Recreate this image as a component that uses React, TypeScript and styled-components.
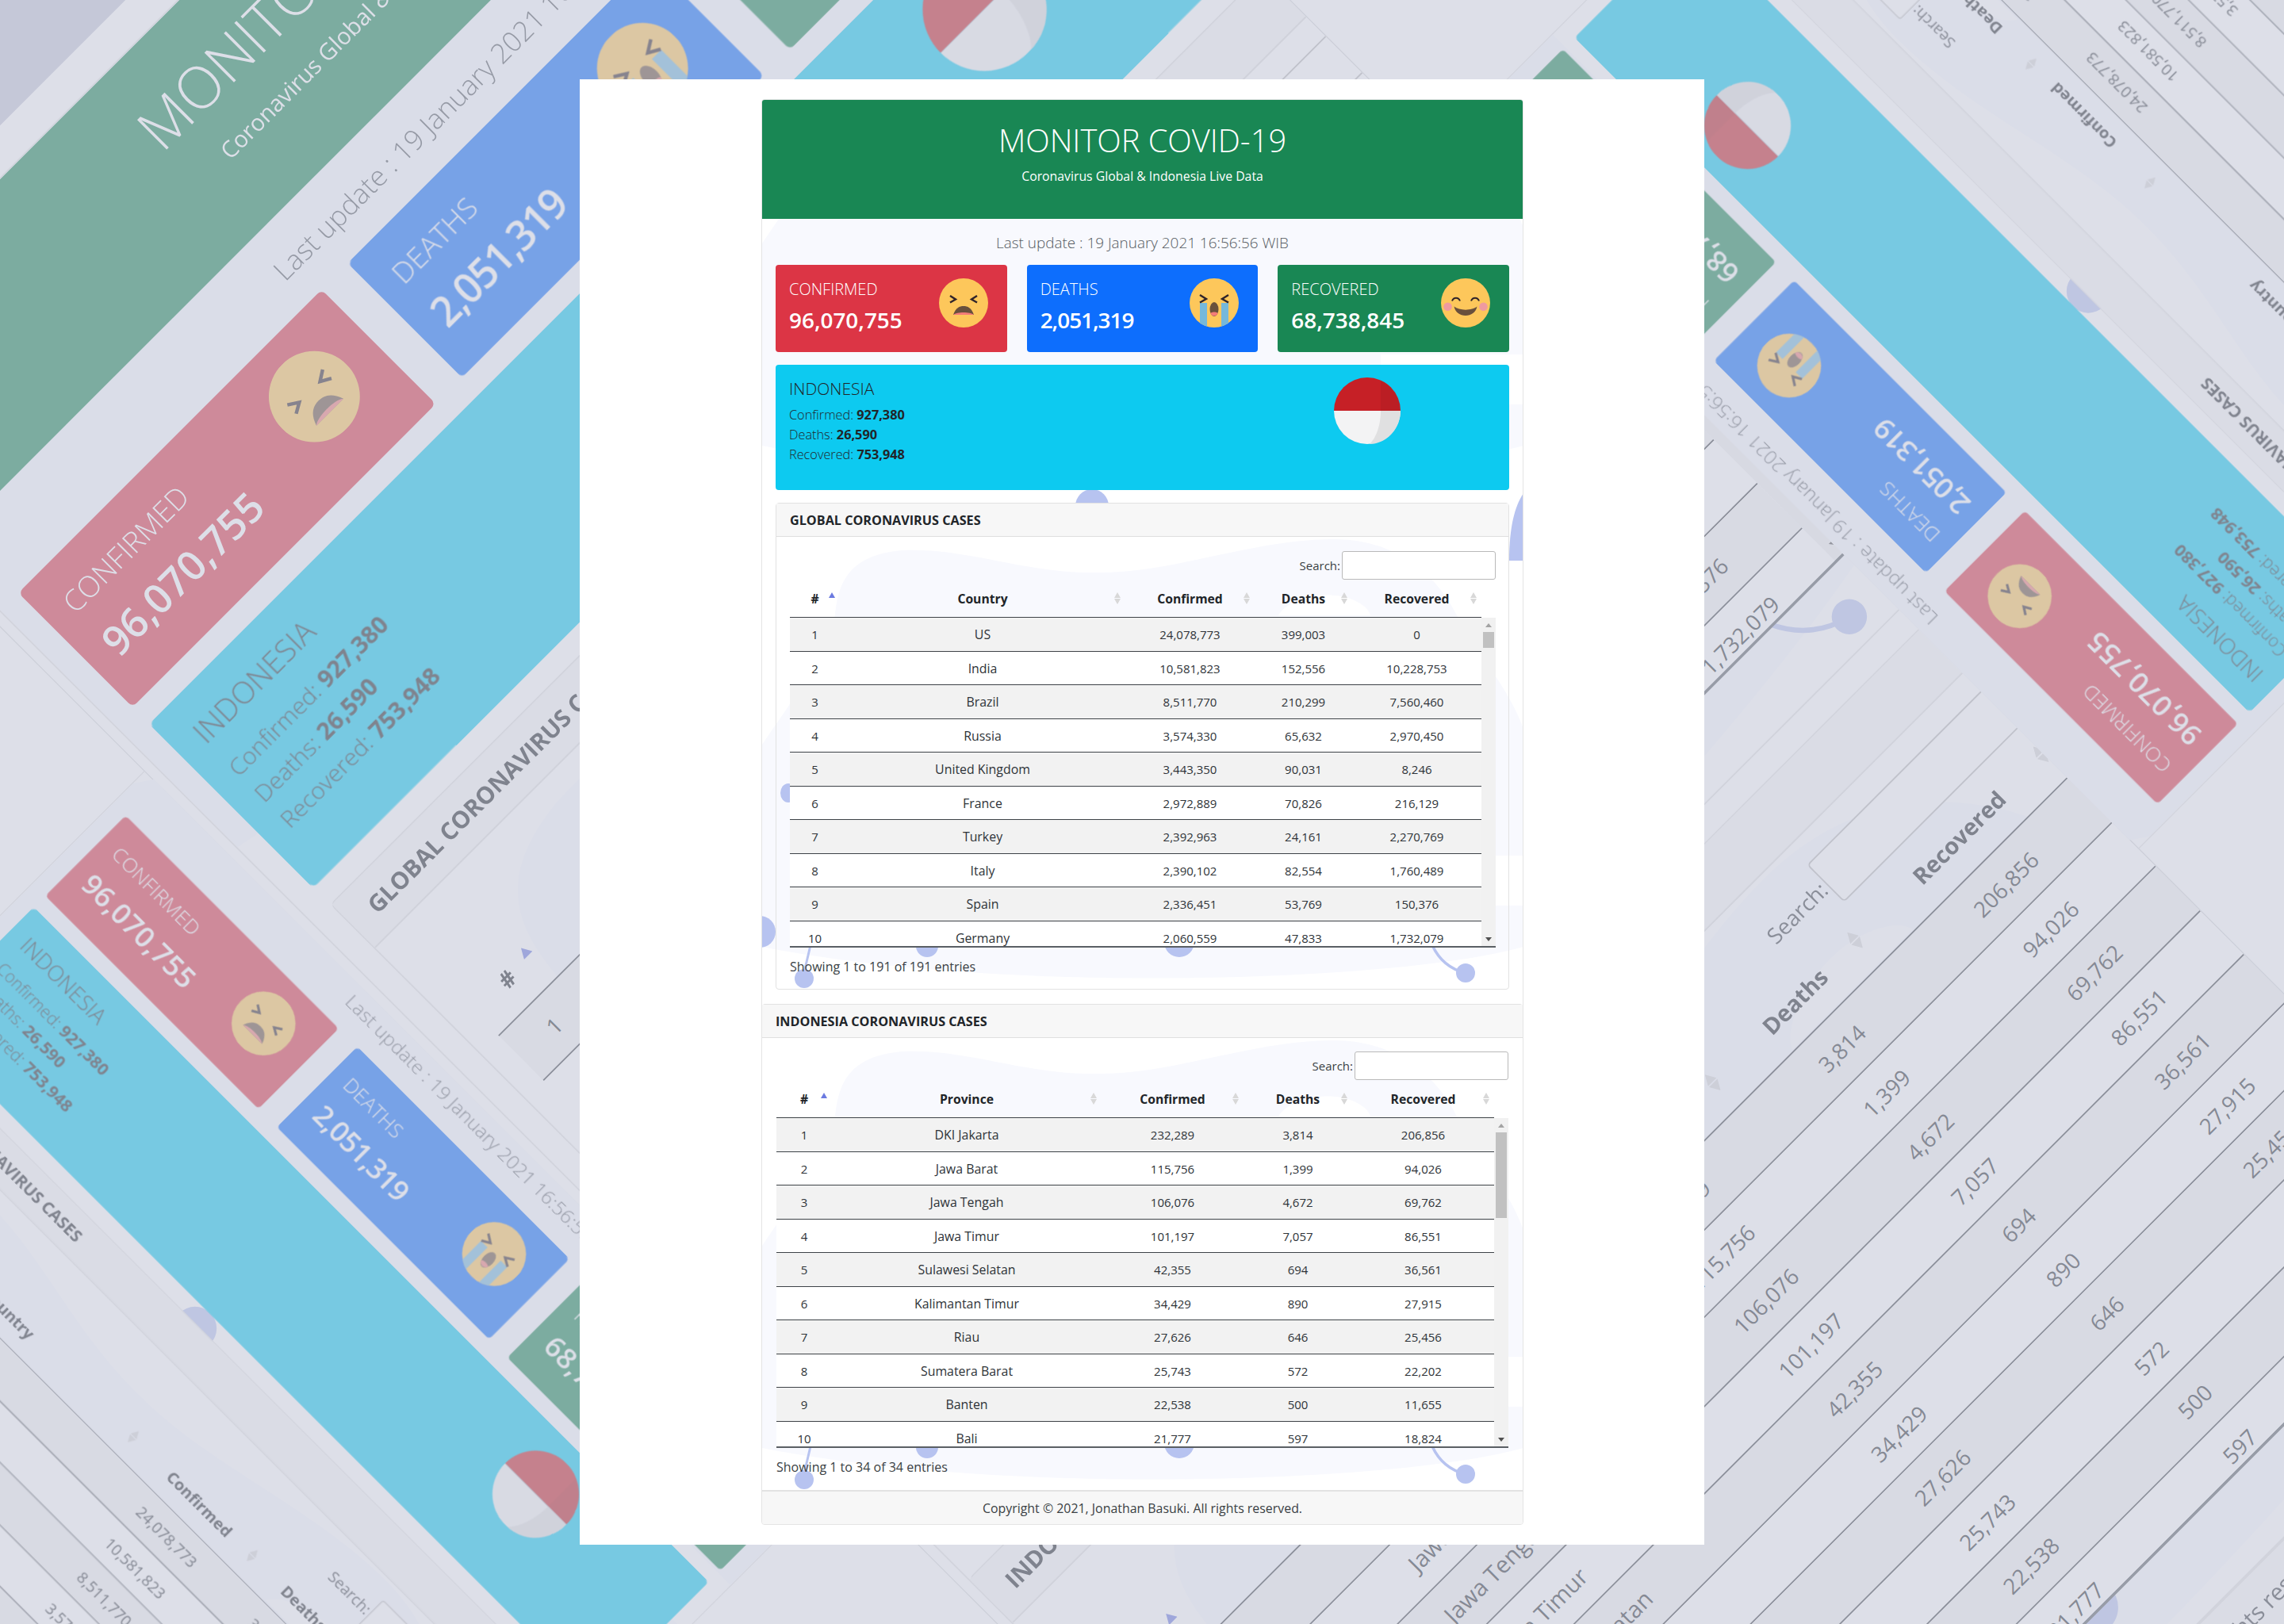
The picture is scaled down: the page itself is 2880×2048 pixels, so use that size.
import styled, { createGlobalStyle } from "styled-components";

const GlobalStyle = createGlobalStyle`
  html, body {
    margin: 0;
    padding: 0;
    background: #c5c8d8;
  }
  * {
    box-sizing: border-box;
  }
`;

const FONT = `"Open Sans", "Noto Sans", "Liberation Sans", sans-serif`;

const GLOBAL_ROWS = [
  ["1", "US", "24,078,773", "399,003", "0"],
  ["2", "India", "10,581,823", "152,556", "10,228,753"],
  ["3", "Brazil", "8,511,770", "210,299", "7,560,460"],
  ["4", "Russia", "3,574,330", "65,632", "2,970,450"],
  ["5", "United Kingdom", "3,443,350", "90,031", "8,246"],
  ["6", "France", "2,972,889", "70,826", "216,129"],
  ["7", "Turkey", "2,392,963", "24,161", "2,270,769"],
  ["8", "Italy", "2,390,102", "82,554", "1,760,489"],
  ["9", "Spain", "2,336,451", "53,769", "150,376"],
  ["10", "Germany", "2,060,559", "47,833", "1,732,079"],
];

const PROVINCE_ROWS = [
  ["1", "DKI Jakarta", "232,289", "3,814", "206,856"],
  ["2", "Jawa Barat", "115,756", "1,399", "94,026"],
  ["3", "Jawa Tengah", "106,076", "4,672", "69,762"],
  ["4", "Jawa Timur", "101,197", "7,057", "86,551"],
  ["5", "Sulawesi Selatan", "42,355", "694", "36,561"],
  ["6", "Kalimantan Timur", "34,429", "890", "27,915"],
  ["7", "Riau", "27,626", "646", "25,456"],
  ["8", "Sumatera Barat", "25,743", "572", "22,202"],
  ["9", "Banten", "22,538", "500", "11,655"],
  ["10", "Bali", "21,777", "597", "18,824"],
];

const Stage = styled.div`
  position: relative;
  width: 2880px;
  height: 2048px;
  overflow: hidden;
  display: flex;
  justify-content: center;
  align-items: flex-start;
  padding-top: 100px;
  font-family: ${FONT};
  color: #212529;
`;

/* the tilted page copies behind the window */
const Backdrop = styled.div`
  position: absolute;
  inset: 0;
  overflow: hidden;
  opacity: 0.42;
`;

const TiltedPage = styled.div<{ $x: number; $y: number; $angle: number; $scale: number; $cut: number }>`
  position: absolute;
  left: 0;
  top: 0;
  width: 1418px;
  height: 1848px;
  background: #fff;
  padding: 25px 0 0 229px;
  transform-origin: 0 0;
  transform: translate(${(p) => p.$x}px, ${(p) => p.$y}px) rotate(${(p) => p.$angle}deg) scale(${(p) => p.$scale})
    translate(731px, 100px);
  clip-path: inset(${(p) => p.$cut}px 0 0 0);
`;

const TiltCutLine = styled.div<{ $top: number }>`
  position: absolute;
  left: 0;
  right: 0;
  top: ${(p) => p.$top}px;
  height: 1px;
  background: #d6d8da;
`;

const Window = styled.main`
  position: relative;
  width: 1418px;
  height: 1848px;
  background: #fff;
  padding: 25px 0 0 229px;
`;

const Sheet = styled.div`
  position: relative;
  width: 961px;
  height: 1798px;
  overflow: hidden;
  border: 1px solid #e4e4e4;
  border-radius: 4px;
`;

const BlobSvg = styled.svg<{ $top: number }>`
  position: absolute;
  left: 0;
  top: ${(p) => p.$top}px;
  width: 960px;
  height: 632px;
  overflow: visible;
`;

const SheetContent = styled.div`
  position: relative;
  display: flex;
  flex-direction: column;
  height: 100%;
`;

const Jumbotron = styled.header`
  height: 150px;
  background: #198754;
  color: #fff;
  display: flex;
  flex-direction: column;
  align-items: center;
  padding-top: 27px;
`;

const SiteTitle = styled.h1`
  margin: 0;
  font-size: 39.8px;
  line-height: 48px;
  font-weight: 300;
`;

const SiteSubtitle = styled.p`
  margin: 11px 0 0;
  font-size: 15.8px;
  line-height: 20px;
`;

const LastUpdate = styled.p`
  margin: 0;
  height: 58px;
  padding-top: 16px;
  text-align: center;
  font-size: 18.9px;
  line-height: 28px;
  font-weight: 300;
  color: #555b61;
`;

const Inner = styled.section`
  padding: 0 17px;
  display: flex;
  flex-direction: column;
`;

const StatGrid = styled.div`
  display: grid;
  grid-template-columns: 1fr 1fr 1fr;
  gap: 25px;
  height: 110px;
`;

const StatCard = styled.div<{ $bg: string }>`
  background: ${(p) => p.$bg};
  color: #fff;
  border-radius: 4px;
  padding: 18px 24px 0 17px;
  display: flex;
  justify-content: space-between;
`;

const StatLabel = styled.div`
  font-size: 20px;
  line-height: 26px;
  font-weight: 300;
`;

const StatValue = styled.div<{ $tight?: boolean }>`
  font-size: 27.9px;
  line-height: 36px;
  font-weight: 600;
  margin-top: 7px;
  letter-spacing: ${(p) => (p.$tight ? "-1px" : "0")};
`;

const FaceIcon = styled.svg`
  width: 62px;
  height: 62px;
  margin-top: -1px;
  flex: none;
`;

const CountryBanner = styled.div`
  margin-top: 16px;
  height: 158px;
  background: #0dcaf0;
  border-radius: 4px;
  padding: 17px 0 0 17px;
  display: grid;
  grid-template-columns: 687px 84px;
`;

const BannerTitle = styled.div`
  font-size: 21px;
  line-height: 26px;
  font-weight: 300;
  margin-bottom: 8px;
`;

const BannerLine = styled.div`
  font-size: 16.3px;
  line-height: 25px;
  font-weight: 300;

  b {
    font-weight: 700;
  }
`;

const FlagIcon = styled.svg`
  width: 84px;
  height: 84px;
  margin-top: -1px;
`;

const TableCard = styled.section<{ $flush?: boolean; $height: number }>`
  margin-top: ${(p) => (p.$flush ? 18 : 16)}px;
  height: ${(p) => p.$height}px;
  border: 1px solid #e2e2e2;
  border-radius: ${(p) => (p.$flush ? "4px 4px 0 0" : "4px")};
  ${(p) => (p.$flush ? "border-left: 0; border-right: 0; border-bottom: 0;" : "")}
  display: flex;
  flex-direction: column;
`;

const TableCardHeader = styled.h2`
  margin: 0;
  flex: none;
  height: 42px;
  padding: 0 17px;
  background: #f7f7f7;
  border-bottom: 1px solid #dfdfdf;
  font-size: 16.2px;
  line-height: 43px;
  font-weight: 700;
  color: #212529;
`;

const TableCardBody = styled.div<{ $flush?: boolean }>`
  padding: ${(p) => (p.$flush ? "17px 18px 0 18px" : "18px 16px 0 17px")};
  flex: 1;
`;

const SearchRow = styled.label`
  display: flex;
  justify-content: flex-end;
  align-items: center;
  gap: 2px;
  height: 36px;
  font-size: 15px;
  color: #3a3f44;
`;

const SearchInput = styled.input`
  width: 194px;
  height: 36px;
  border: 1px solid #b9b9b9;
  border-radius: 3px;
  background: #fff;
`;

const HeadRow = styled.div<{ $cols: string }>`
  display: grid;
  grid-template-columns: ${(p) => p.$cols};
  height: 48px;
  margin-right: 18px;
  border-bottom: 1.5px solid #3d4247;
`;

const HeadCell = styled.div`
  position: relative;
  text-align: center;
  font-size: 15.7px;
  line-height: 48px;
  font-weight: 700;
  color: #212529;
`;

const SortMark = styled.svg`
  position: absolute;
  right: 6px;
  top: 16px;
  width: 8px;
  height: 15px;
`;

const ScrollArea = styled.div`
  display: grid;
  grid-template-columns: 1fr 18px;
  height: 414px;
  overflow: hidden;
`;

const RowStack = styled.div`
  overflow: hidden;
`;

const BodyRow = styled.div<{ $cols: string; $odd: boolean }>`
  display: grid;
  grid-template-columns: ${(p) => p.$cols};
  height: 42.5px;
  background: ${(p) => (p.$odd ? "#f2f2f2" : "#fff")};
  border-bottom: 1px solid #3d4247;
`;

const BodyCell = styled.div<{ $name: boolean }>`
  text-align: center;
  font-size: ${(p) => (p.$name ? 15.9 : 15)}px;
  line-height: 42px;
  color: #2e3338;
`;

const ScrollTrack = styled.div`
  background: #f1f1f1;
  display: flex;
  flex-direction: column;
  align-items: center;
`;

const ScrollArrow = styled.svg`
  width: 8px;
  height: 5px;
  flex: none;
  margin: 7px 0 6px;
`;

const ScrollThumb = styled.div<{ $height: number }>`
  width: 14px;
  height: ${(p) => p.$height}px;
  background: #c1c1c1;
  flex: none;
`;

const ScrollSpacer = styled.div`
  flex: 1;
`;

const TableEnd = styled.div`
  height: 2px;
  background: #5a5f64;
`;

const InfoLine = styled.div`
  margin-top: 12px;
  font-size: 16px;
  line-height: 24px;
  color: #3a3f44;
`;

const SheetFooter = styled.footer`
  height: 43px;
  margin-top: auto;
  background: #f7f7f7;
  border-top: 2px solid #e2e2e2;
  text-align: center;
  font-size: 15.9px;
  line-height: 43px;
  color: #3a3f44;
`;

function AngryFace() {
  return (
    <FaceIcon viewBox="-31 -31 62 62">
      <circle r="31" fill="#fdc75b" />
      <path d="M-17 -9 L-10 -4.5 L-17 -0.5 M17 -9 L10 -4.5 L17 -0.5" fill="none" stroke="#30242a" strokeWidth="2.4" />
      <path d="M-13 15 C-10 6 -5 4 0 4 C5 4 10 6 13 15 Z" fill="#69503c" />
      <path d="M-13 15 C-9 11 9 11 13 15 Z" fill="#f47c78" />
    </FaceIcon>
  );
}

function CryingFace() {
  return (
    <FaceIcon viewBox="-31 -31 62 62">
      <clipPath id="cry-clip">
        <circle r="31" />
      </clipPath>
      <circle r="31" fill="#fdc75b" />
      <g clipPath="url(#cry-clip)">
        <rect x="-18" y="0" width="9" height="32" fill="#75b8db" />
        <rect x="9" y="0" width="9" height="32" fill="#75b8db" />
      </g>
      <path d="M-18 -10 L-10 -5 L-18 -0.5 M18 -10 L10 -5 L18 -0.5" fill="none" stroke="#30242a" strokeWidth="2.4" />
      <ellipse cx="0" cy="8" rx="5.5" ry="9" fill="#69503c" />
      <path d="M-4.6 13 C-3 11 3 11 4.6 13 C3.5 17.5 -3.5 17.5 -4.6 13 Z" fill="#f47c78" />
    </FaceIcon>
  );
}

function HappyFace() {
  return (
    <FaceIcon viewBox="-31 -31 62 62">
      <circle r="31" fill="#fdc75b" />
      <circle cx="-22.5" cy="4.7" r="5.3" fill="#ef9a9f" />
      <circle cx="22.5" cy="4.7" r="5.3" fill="#ef9a9f" />
      <path d="M-17 -2.5 C-15 -7.5 -9 -7.5 -7 -2.5 M7 -2.5 C9 -7.5 15 -7.5 17 -2.5" fill="none" stroke="#30242a" strokeWidth="2" />
      <path d="M-14.5 4.5 C-8 10 8 10 14.5 4.5 C13 12 7 16 0 16 C-7 16 -13 12 -14.5 4.5 Z" fill="#69503c" />
    </FaceIcon>
  );
}

function IndonesiaFlag() {
  return (
    <FlagIcon viewBox="-42 -42 84 84">
      <path d="M-42 0 A42 42 0 0 1 42 0 Z" fill="#c62026" />
      <path d="M17 -38.5 C32 -30 42 -16 42 0 L17 0 Z" fill="#000" opacity="0.05" />
      <path d="M-42 0 A42 42 0 0 0 42 0 Z" fill="#f3f3f4" />
      <path d="M17 0 C17 20 10 36 3 42 C26 41 42 22 42 0 Z" fill="#e0e0e1" />
    </FlagIcon>
  );
}

function BlobTile({ top, extras }: { top: number; extras?: "first" | "second" }) {
  return (
    <BlobSvg $top={top} viewBox="0 0 960 632">
      <path
        d="M92 82 C96 40 110 6 176 0 C260 -4 330 30 426 28 C520 28 620 -14 720 -14 C800 -14 850 30 876 82 C900 130 940 170 960 225 L960 385 L780 385 L780 448 L960 448 L960 500 C800 545 300 560 0 500 L0 245 C30 200 70 150 92 82 Z"
        fill="#f8f9fe"
      />
      <path d="M651 82 C660 64 700 52 730 58 C750 62 765 72 767 82 Z" fill="#fff" />
      <ellipse cx="33" cy="306" rx="10" ry="12" fill="#b7c3f0" />
      <circle cx="208" cy="499" r="14" fill="#b7c3f0" />
      <circle cx="526" cy="494" r="19" fill="#b7c3f0" />
      <path d="M61 498 L53 532" stroke="#b7c3f0" strokeWidth="3" fill="none" />
      <circle cx="53" cy="540" r="12" fill="#b7c3f0" />
      <path d="M845 498 Q858 526 887 533" stroke="#b7c3f0" strokeWidth="3.5" fill="none" />
      <circle cx="887" cy="533" r="12" fill="#b7c3f0" />
      {extras === "first" && (
        <>
          <circle cx="416" cy="576" r="21" fill="#b7c3f0" />
          <path d="M960 560 C950 575 942 600 942 645 L960 645 Z" fill="#b7c3f0" />
        </>
      )}
      {extras === "second" && <circle cx="-3" cy="481" r="20" fill="#b7c3f0" />}
    </BlobSvg>
  );
}

function SortIcon({ active }: { active?: boolean }) {
  if (active) {
    return (
      <SortMark viewBox="0 0 8 15">
        <path d="M4 0 L8 7 L0 7 Z" fill="#6b7ae0" />
      </SortMark>
    );
  }
  return (
    <SortMark viewBox="0 0 8 15">
      <path d="M4 0 L8 7 L0 7 Z M0 8 L8 8 L4 15 Z" fill="#d8d8d8" />
    </SortMark>
  );
}

interface CasesTableProps {
  title: string;
  nameColumn: string;
  cols: string;
  rows: string[][];
  thumb: number;
  info: string;
  height: number;
  flush?: boolean;
}

function CasesTable({ title, nameColumn, cols, rows, thumb, info, height, flush }: CasesTableProps) {
  const heads = ["#", nameColumn, "Confirmed", "Deaths", "Recovered"];
  return (
    <TableCard $flush={flush} $height={height}>
      <TableCardHeader>{title}</TableCardHeader>
      <TableCardBody $flush={flush}>
        <SearchRow>
          Search:
          <SearchInput type="text" />
        </SearchRow>
        <HeadRow $cols={cols}>
          {heads.map((h, i) => (
            <HeadCell key={h}>
              {h}
              <SortIcon active={i === 0} />
            </HeadCell>
          ))}
        </HeadRow>
        <ScrollArea>
          <RowStack>
            {rows.map((row, i) => (
              <BodyRow key={row[0]} $cols={cols} $odd={i % 2 === 0}>
                {row.map((cell, j) => (
                  <BodyCell key={j} $name={j === 1}>
                    {cell}
                  </BodyCell>
                ))}
              </BodyRow>
            ))}
          </RowStack>
          <ScrollTrack>
            <ScrollArrow viewBox="0 0 8 5">
              <path d="M4 0 L8 5 L0 5 Z" fill="#a3a3a3" />
            </ScrollArrow>
            <ScrollThumb $height={thumb} />
            <ScrollSpacer />
            <ScrollArrow viewBox="0 0 8 5">
              <path d="M0 0 L8 0 L4 5 Z" fill="#505050" />
            </ScrollArrow>
          </ScrollTrack>
        </ScrollArea>
        <TableEnd />
        <InfoLine>{info}</InfoLine>
      </TableCardBody>
    </TableCard>
  );
}

function Dashboard() {
  return (
    <Sheet>
      <BlobTile top={-64} extras="first" />
      <BlobTile top={568} extras="second" />
      <BlobTile top={1200} />
      <SheetContent>
        <Jumbotron>
          <SiteTitle>MONITOR COVID-19</SiteTitle>
          <SiteSubtitle>Coronavirus Global &amp; Indonesia Live Data</SiteSubtitle>
        </Jumbotron>
        <LastUpdate>Last update : 19 January 2021 16:56:56 WIB</LastUpdate>
        <Inner>
          <StatGrid>
            <StatCard $bg="#dc3545">
              <div>
                <StatLabel>CONFIRMED</StatLabel>
                <StatValue>96,070,755</StatValue>
              </div>
              <AngryFace />
            </StatCard>
            <StatCard $bg="#0d6efd">
              <div>
                <StatLabel>DEATHS</StatLabel>
                <StatValue $tight>2,051,319</StatValue>
              </div>
              <CryingFace />
            </StatCard>
            <StatCard $bg="#198754">
              <div>
                <StatLabel>RECOVERED</StatLabel>
                <StatValue>68,738,845</StatValue>
              </div>
              <HappyFace />
            </StatCard>
          </StatGrid>
          <CountryBanner>
            <div>
              <BannerTitle>INDONESIA</BannerTitle>
              <BannerLine>
                Confirmed: <b>927,380</b>
              </BannerLine>
              <BannerLine>
                Deaths: <b>26,590</b>
              </BannerLine>
              <BannerLine>
                Recovered: <b>753,948</b>
              </BannerLine>
            </div>
            <IndonesiaFlag />
          </CountryBanner>
          <CasesTable
            title="GLOBAL CORONAVIRUS CASES"
            nameColumn="Country"
            cols="63px 360px 163px 123px 163px"
            rows={GLOBAL_ROWS}
            thumb={20}
            info="Showing 1 to 191 of 191 entries"
            height={614}
          />
        </Inner>
        <CasesTable
          flush
          title="INDONESIA CORONAVIRUS CASES"
          nameColumn="Province"
          cols="70px 340px 179px 137px 179px"
          rows={PROVINCE_ROWS}
          thumb={108}
          info="Showing 1 to 34 of 34 entries"
          height={613}
        />
        <SheetFooter>Copyright © 2021, Jonathan Basuki. All rights reserved.</SheetFooter>
      </SheetContent>
    </Sheet>
  );
}

export default function App() {
  return (
    <Stage>
      <GlobalStyle />
      <Backdrop aria-hidden>
        {/* large copy running up to the right, with the two smaller ones on top of it */}
        <TiltedPage $x={-1695} $y={1591} $angle={-45} $scale={1.852} $cut={0}>
          <Dashboard />
        </TiltedPage>
        <TiltedPage $x={-434} $y={-178.5} $angle={45} $scale={1.301} $cut={190}>
          <TiltCutLine $top={190} />
          <Dashboard />
        </TiltedPage>
        <TiltedPage $x={3313} $y={2221} $angle={225} $scale={1.301} $cut={190}>
          <TiltCutLine $top={190} />
          <Dashboard />
        </TiltedPage>
      </Backdrop>
      <Window>
        <Dashboard />
      </Window>
    </Stage>
  );
}
